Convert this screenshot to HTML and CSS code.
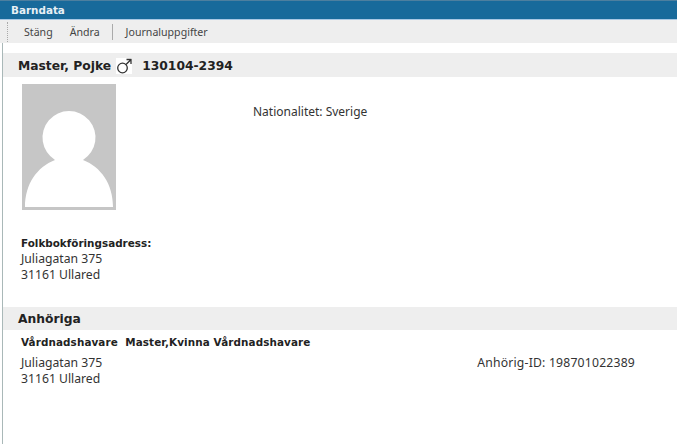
FILE: index.html
```html
<!DOCTYPE html>
<html lang="en">
<head>
    <meta charset="UTF-8">
    <meta name="viewport" content="width=device-width, initial-scale=1.0">
    <title>Barndata</title>
    <link rel="stylesheet" href="styles.css">
</head>
<body>

    <div class="titlebar">Barndata</div>

    <div class="toolbar">
        <span class="grip"></span>
        <span class="tool">Stäng</span>
        <span class="tool">Ändra</span>
        <span class="divider"></span>
        <span class="tool">Journaluppgifter</span>
    </div>

    <div class="content">
        <div class="section-head person-head">
            <span>Master, Pojke</span>
            <svg class="gender" width="16" height="16" viewBox="0 0 16 16">
                <rect width="16" height="16" fill="#fff"/>
                <circle cx="6.500" cy="10" r="4.800" fill="none" stroke="#333" stroke-width="1.300"/>
                <path d="M10 6.500 L14.800 1.700 M10.500 1.500 H15 V6" fill="none" stroke="#333" stroke-width="1.300"/>
            </svg>
            <span>130104-2394</span>
        </div>

        <div class="person">
            <svg class="photo" width="94" height="126" viewBox="0 0 94 126">
                <rect width="94" height="126" fill="#c6c6c6"/>
                <path d="M3 123 C3 100 15 83 33 76 A26.500 26.500 0 1 1 61 76 C79 83 91 100 91 123 Z" fill="#fff"/>
            </svg>
            <p class="nationality">Nationalitet: Sverige</p>
        </div>

        <div class="address">
            <p class="label">Folkbokföringsadress:</p>
            <p>Juliagatan 375</p>
            <p>31161 Ullared</p>
        </div>

        <div class="section-head relatives-head">Anhöriga</div>

        <div class="relative">
            <p class="label relative-name">Vårdnadshavare&nbsp; Master,Kvinna Vårdnadshavare</p>
            <div class="relative-row">
                <div>
                    <p>Juliagatan 375</p>
                    <p>31161 Ullared</p>
                </div>
                <p class="relative-id">Anhörig-ID: 198701022389</p>
            </div>
        </div>
    </div>

</body>
</html>
```
FILE: styles.css
```css
html, body {
    height: 100%;
}

body {
    margin: 0;
    display: flex;
    flex-direction: column;
    font-family: "Noto Sans", sans-serif;
    font-size: 12.2px;
    line-height: 16px;
    color: #333;
    background-color: white;
    overflow: hidden;
}

p {
    margin: 0;
}

.titlebar {
    height: 18px;
    padding-left: 11px;
    background-color: #186a9b;
    border-top: 1px solid #4d7f9f;
    border-bottom: 1px solid #a9c8e4;
    color: #e8f0f5;
    font-family: "DejaVu Sans", sans-serif;
    font-size: 10.4px;
    font-weight: bold;
    line-height: 18px;
}

.toolbar {
    height: 23px;
    display: flex;
    align-items: center;
    background-color: #eeeeee;
    font-size: 10.6px;
    color: #444;
}

.grip {
    width: 0;
    height: 20px;
    margin-left: 7px;
    border-left: 1px dotted #aaa;
}

.tool {
    margin-left: 16px;
}

.tool + .tool {
    margin-left: 17px;
}

.divider {
    width: 1px;
    height: 16px;
    margin-left: 12px;
    margin-right: -3px;
    background-color: #aaa;
}

.content {
    flex: 1;
    padding-top: 10px;
    margin-left: 2px;
    border-left: 1px solid #a9b8b8;
}

.section-head {
    height: 23px;
    padding: 1px 0 0 15px;
    display: flex;
    align-items: center;
    background-color: #eeeeee;
    color: #222;
    font-family: "DejaVu Sans", sans-serif;
    font-size: 12.3px;
    font-weight: bold;
}

.gender {
    margin: 0 10px 0 5px;
}

.person {
    display: flex;
    padding: 7px 0 0 19px;
}

.photo {
    display: block;
}

.nationality {
    margin: 20px 0 0 137px;
    font-size: 12px;
}

.address {
    padding: 25px 0 0 18px;
    height: 72px;
}

.relatives-head {
    height: 22px;
}

.label {
    font-family: "DejaVu Sans", sans-serif;
    font-size: 10.4px;
    font-weight: bold;
    color: #222;
}

.relative {
    padding: 4px 0 0 18px;
}

.relative-name {
    margin-bottom: 5px;
    letter-spacing: 0.1px;
}

.relative-row {
    display: flex;
    justify-content: space-between;
    padding-right: 42px;
}

.relative-id {
    letter-spacing: 0.2px;
}
```
